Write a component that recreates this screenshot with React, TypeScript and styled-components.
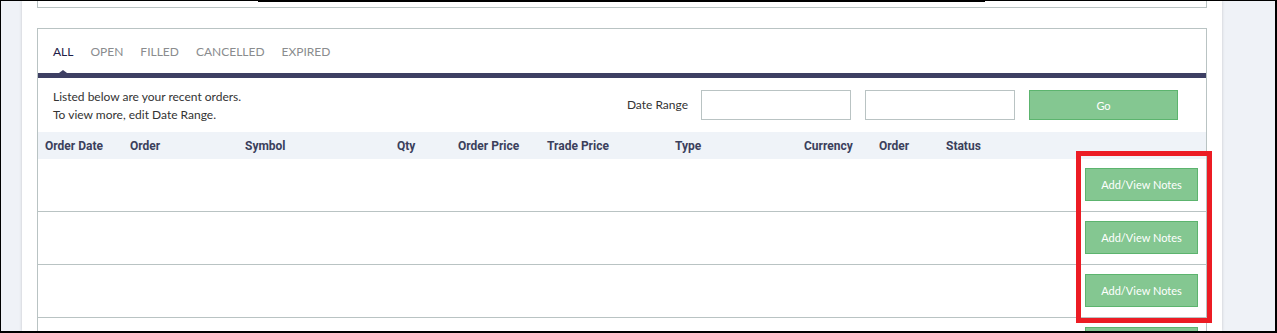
import * as React from 'react';
import styled, { createGlobalStyle } from 'styled-components';

const GlobalStyle = createGlobalStyle`
  body {
    margin: 0;
    background: #ffffff;
  }
  * {
    box-sizing: border-box;
  }
`;

const Frame = styled.div`
  width: 1277px;
  height: 333px;
  overflow: hidden;
  background-color: #eff2f7;
  border-style: solid;
  border-color: #000;
  border-width: 1px 2px 2px 1px;
  display: flex;
`;
const Main = styled.div`
  width: 1200px;
  margin-left: 21px;
  height: 100%;
  background-color: #fff;
  box-shadow: 0 0 3px rgba(0, 0, 0, 0.18);
  padding: 0 15px;
  display: flex;
  flex-direction: column;
`;
const TopCard = styled.div`
  flex-shrink: 0;
  height: 7px;
  border: 1px solid #b9c3c3;
  border-top: none;
`;
const TopBar = styled.div`
  width: 727px;
  height: 1px;
  margin-left: 220px;
  background-color: #000;
`;
const Card = styled.div`
  flex-shrink: 0;
  margin-top: 20px;
  border: 1px solid #b9c3c3;
  position: relative;
  font-family: Lato, 'Open Sans', sans-serif;
`;
const Tabs = styled.div`
  height: 49px;
  display: flex;
  align-items: center;
  gap: 17px;
  padding: 0 15px;
  border-bottom: 5px solid #3d3f63;
`;
const Tab = styled.div<{ active?: boolean }>`
  font-size: 12px;
  color: ${props => (props.active ? '#1e2048' : '#8a8c8e')};
  position: relative;
  height: 44px;
  line-height: 44px;
  padding-top: 1px;

  &::after {
    content: '';
    display: ${props => (props.active ? 'block' : 'none')};
    position: absolute;
    bottom: 0;
    left: 50%;
    transform: translateX(-50%);
    border-left: 4px solid transparent;
    border-right: 4px solid transparent;
    border-bottom: 3px solid #3d3f63;
  }
`;
const FilterRow = styled.div`
  height: 54px;
  display: flex;
  align-items: flex-start;
  padding: 0 28px 0 15px;
`;
const Note = styled.div`
  font-size: 12px;
  line-height: 18px;
  color: #333;
  padding-top: 10px;
  flex: 1;
`;
const DateLabel = styled.div`
  font-size: 12px;
  color: #333;
  margin-top: 19px;
  margin-right: 13px;
`;
const DateInput = styled.input`
  width: 150px;
  height: 30px;
  margin-top: 12px;
  margin-right: 14px;
  border: 1px solid #b9c3c3;
  background: #fff;
  outline: none;
`;
const GreenButton = styled.button<{ w: number; h: number }>`
  width: ${props => props.w}px;
  height: ${props => props.h}px;
  background-color: #84c791;
  border: 1px solid #5cb46e;
  color: #fff;
  font-family: Lato, 'Open Sans', sans-serif;
  font-size: 11px;
  padding: 0;
  cursor: pointer;
`;
const GoButton = styled(GreenButton)`
  margin-top: 12px;
`;
const cols = '85px 115px 152px 61px 89px 128px 129px 75px 67px 1fr';
const HeadRow = styled.div`
  height: 27px;
  background-color: #eff3f8;
  display: grid;
  grid-template-columns: ${cols};
  align-items: center;
  padding-left: 7px;
`;
const HeadCell = styled.div`
  font-family: Roboto, 'Liberation Sans', sans-serif;
  font-weight: 700;
  font-size: 12px;
  color: #3b3f5c;
`;
const Row = styled.div`
  height: 53px;
  border-bottom: 1px solid #b9c3c3;
  display: flex;
  align-items: flex-start;
  justify-content: flex-end;
  padding: 9px 8px 0 0;
`;
const Highlight = styled.div`
  position: absolute;
  left: 1038px;
  top: 122px;
  width: 136px;
  height: 172px;
  border: 5px solid #ec1c24;
  pointer-events: none;
`;

const tabs = ['ALL', 'OPEN', 'FILLED', 'CANCELLED', 'EXPIRED'];
const heads = [
  'Order Date',
  'Order',
  'Symbol',
  'Qty',
  'Order Price',
  'Trade Price',
  'Type',
  'Currency',
  'Order',
  'Status'
];

export default function App() {
  return (
    <>
      <GlobalStyle />
      <Frame>
        <Main>
          <TopCard>
            <TopBar />
          </TopCard>
          <Card>
            <Tabs>
              {tabs.map((t, i) => (
                <Tab key={t} active={i === 0}>
                  {t}
                </Tab>
              ))}
            </Tabs>
            <FilterRow>
              <Note>
                Listed below are your recent orders.
                <br />
                To view more, edit Date Range.
              </Note>
              <DateLabel>Date Range</DateLabel>
              <DateInput />
              <DateInput />
              <GoButton w={149} h={30}>
                Go
              </GoButton>
            </FilterRow>
            <HeadRow>
              {heads.map((h, i) => (
                <HeadCell key={i}>{h}</HeadCell>
              ))}
            </HeadRow>
            {[0, 1, 2, 3].map(i => (
              <Row key={i}>
                <GreenButton w={113} h={33}>
                  Add/View Notes
                </GreenButton>
              </Row>
            ))}
            <Highlight />
          </Card>
        </Main>
      </Frame>
    </>
  );
}
